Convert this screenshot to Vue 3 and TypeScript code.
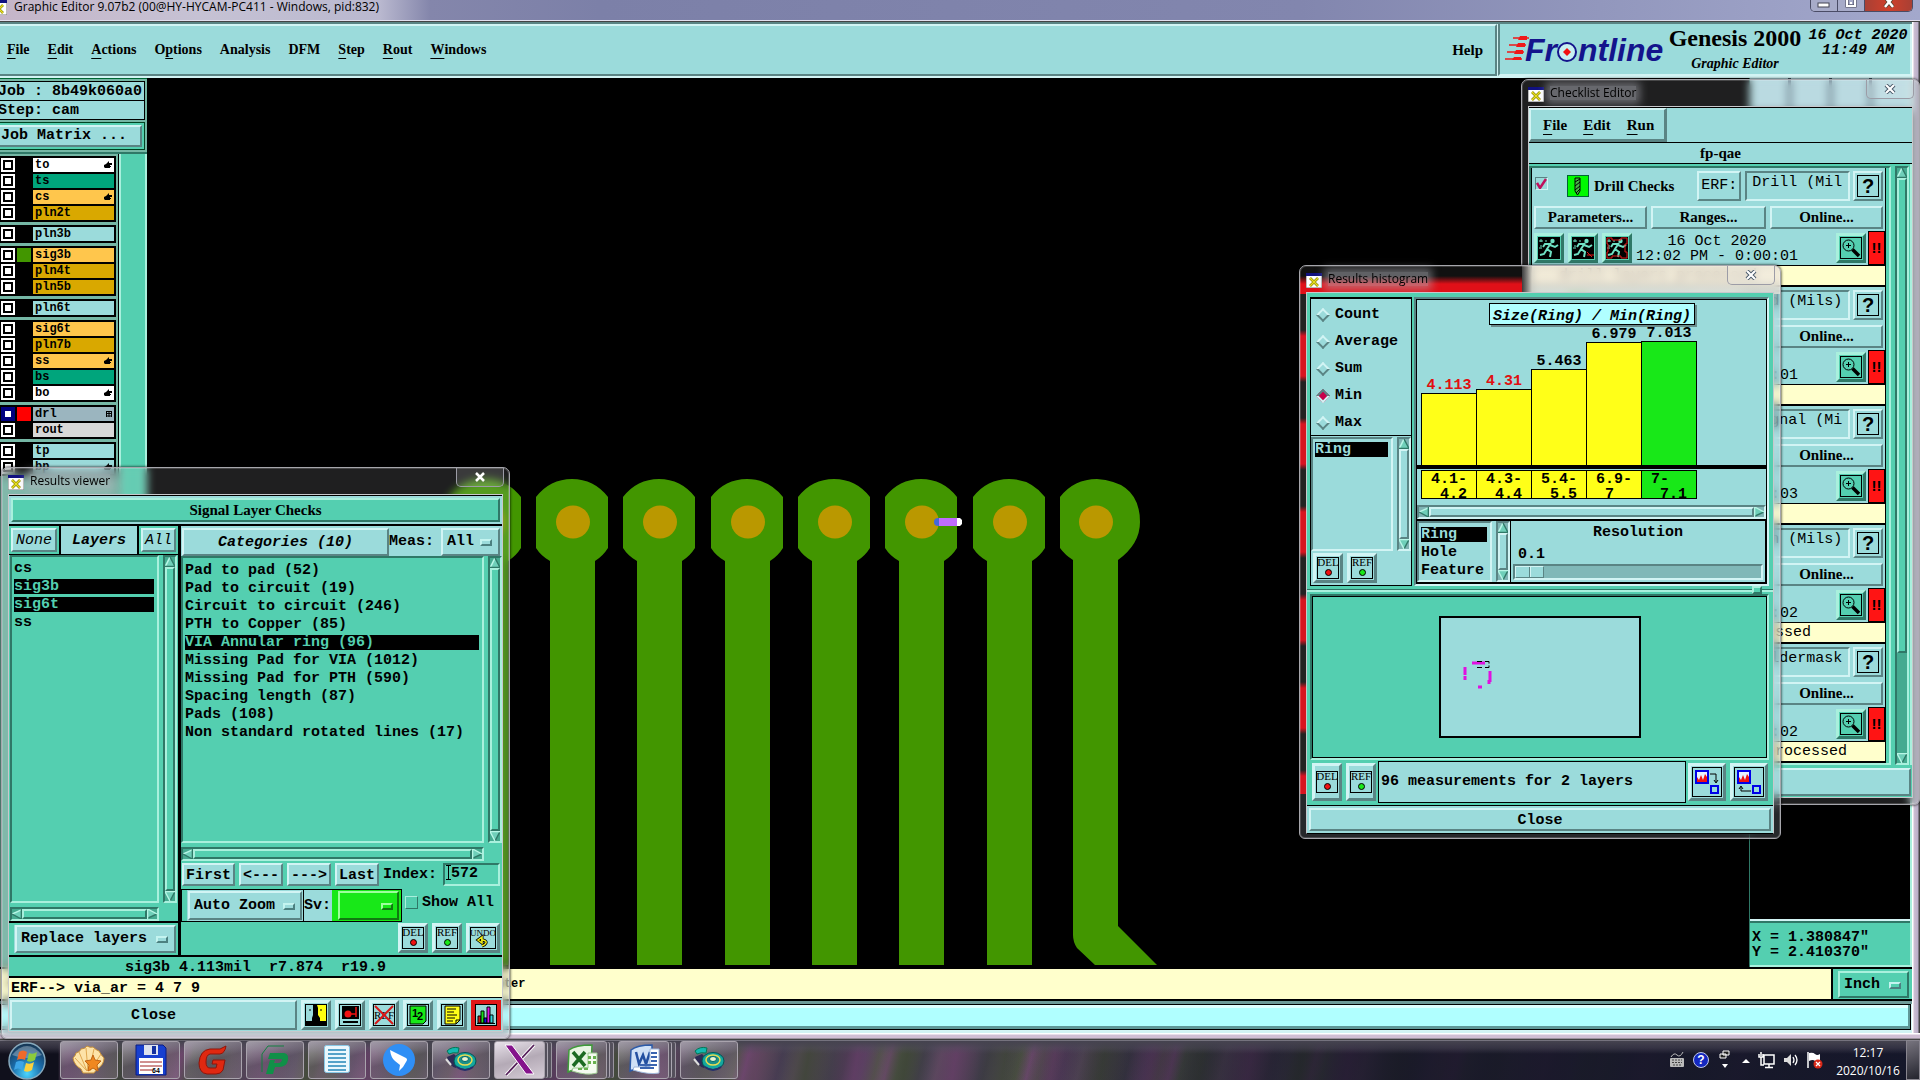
<script setup lang="ts">
import { ref } from 'vue'

interface MenuEntry { pre: string; key: string; post: string }
interface Layer { name: string; color: string; hand?: boolean; grid?: boolean; swatch?: string; active?: boolean }
interface Check { title: string; erf: string; time: string; message: string }
interface Bin { value: string; from: string; to: string; height: number; low?: boolean; good?: boolean }

const mainMenu: MenuEntry[] = [
  { pre: '', key: 'F', post: 'ile' },
  { pre: '', key: 'E', post: 'dit' },
  { pre: '', key: 'A', post: 'ctions' },
  { pre: 'O', key: 'p', post: 'tions' },
  { pre: 'Analysis', key: '', post: '' },
  { pre: 'DFM', key: '', post: '' },
  { pre: '', key: 'S', post: 'tep' },
  { pre: '', key: 'R', post: 'out' },
  { pre: '', key: 'W', post: 'indows' },
]
const checkMenu: MenuEntry[] = [
  { pre: '', key: 'F', post: 'ile' },
  { pre: '', key: 'E', post: 'dit' },
  { pre: '', key: 'R', post: 'un' },
]

const white = '#ffffff'
const mask = '#00a57c'
const signal = '#ffc64c'
const plane = '#d9a800'
const misc = '#9bdbdb'
const layerGroups: Layer[][] = [
  [
    { name: 'to', color: white, hand: true },
    { name: 'ts', color: mask },
    { name: 'cs', color: signal, hand: true },
    { name: 'pln2t', color: plane },
  ],
  [{ name: 'pln3b', color: misc }],
  [
    { name: 'sig3b', color: signal, swatch: '#429600' },
    { name: 'pln4t', color: plane },
    { name: 'pln5b', color: plane },
  ],
  [{ name: 'pln6t', color: misc }],
  [
    { name: 'sig6t', color: signal },
    { name: 'pln7b', color: plane },
    { name: 'ss', color: signal, hand: true },
    { name: 'bs', color: mask },
    { name: 'bo', color: white, hand: true },
  ],
  [
    { name: 'drl', color: '#9bb5bf', swatch: '#ff0000', active: true, grid: true },
    { name: 'rout', color: '#d8d8d8' },
  ],
  [
    { name: 'tp', color: misc },
    { name: 'bp', color: misc, hand: true },
  ],
]

const pads: number[] = [485, 572, 659, 747, 834, 921, 1009]

const viewerLayers = ['cs', 'sig3b', 'sig6t', 'ss']
const pickedLayers = ['sig3b', 'sig6t']
const categories = [
  'Pad to pad (52)', 'Pad to circuit (19)', 'Circuit to circuit (246)', 'PTH to Copper (85)',
  'VIA Annular ring (96)', 'Missing Pad for VIA (1012)', 'Missing Pad for PTH (590)',
  'Spacing length (87)', 'Pads (108)', 'Non standard rotated lines (17)',
]
const category = ref(4)
const index = ref('572')

const stats = ['Count', 'Average', 'Sum', 'Min', 'Max']
const stat = ref('Min')
const features = ['Ring', 'Hole', 'Feature']
const bins: Bin[] = [
  { value: '4.113', from: '4.1-', to: '4.2', height: 72, low: true },
  { value: '4.31', from: '4.3-', to: '4.4', height: 76, low: true },
  { value: '5.463', from: '5.4-', to: '5.5', height: 96 },
  { value: '6.979', from: '6.9-', to: '7', height: 123 },
  { value: '7.013', from: '7-', to: '7.1', height: 124, good: true },
]

const checks: Check[] = [
  { title: 'Drill Checks', erf: 'Drill (Mil', time: '0:00:01', message: '   drill layers processed' },
  { title: 'Board Checks', erf: 'Brd (Mils)', time: '0:00:01', message: '' },
  { title: 'Signal Checks', erf: 'Signal (Mi', time: '0:00:03', message: '' },
  { title: 'Plane Checks', erf: 'Pln (Mils)', time: '0:00:02', message: '         Plane layers processed' },
  { title: 'Mask Checks', erf: 'Soldermask', time: '0:00:02', message: '       Solder mask layers processed' },
]
</script>

<template>
  <div class="screen">
    <svg class="defs" aria-hidden="true">
      <symbol id="i-x" viewBox="0 0 16 15">
        <rect width="16" height="15" fill="#fff" stroke="#777" />
        <rect width="16" height="3" fill="#101080" />
        <path d="M4 5l8 8M12 5l-8 8" stroke="#8a8200" stroke-width="2.6" />
        <path d="M4 5l8 8M12 5l-8 8" stroke="#e8e020" stroke-width="1.3" />
      </symbol>
      <symbol id="i-up" viewBox="0 0 10 10">
        <path d="M5 0L0 10h10z" fill="#6fcfb9" /><path d="M5 0L0 10" stroke="#b8f6e6" stroke-width="1.6" /><path d="M5 0l5 9.4H0" fill="none" stroke="#2f7867" stroke-width="1.4" />
      </symbol>
      <symbol id="i-down" viewBox="0 0 10 10">
        <path d="M5 10L0 0h10z" fill="#6fcfb9" /><path d="M5 10L10 .6" stroke="#2f7867" stroke-width="1.4" /><path d="M5 10L0 .6h10" fill="none" stroke="#b8f6e6" stroke-width="1.4" />
      </symbol>
      <symbol id="i-left" viewBox="0 0 10 10">
        <path d="M0 5L10 0v10z" fill="#6fcfb9" /><path d="M0 5L10 .6" stroke="#b8f6e6" stroke-width="1.4" /><path d="M0 5l9.4 5V0" fill="none" stroke="#2f7867" stroke-width="1.4" />
      </symbol>
      <symbol id="i-right" viewBox="0 0 10 10">
        <path d="M10 5L0 0v10z" fill="#6fcfb9" /><path d="M10 5L0 9.6" stroke="#2f7867" stroke-width="1.4" /><path d="M10 5L.6 0v10" fill="none" stroke="#b8f6e6" stroke-width="1.4" />
      </symbol>
      <symbol id="i-del" viewBox="0 0 22 22">
        <rect x=".5" y=".5" width="21" height="21" fill="none" stroke="#000" />
        <text x="11" y="9" class="tiny" text-anchor="middle">DEL</text>
        <circle cx="11.500" cy="15.500" r="3" fill="#f01010" stroke="#000" />
      </symbol>
      <symbol id="i-ref" viewBox="0 0 22 22">
        <rect x=".5" y=".5" width="21" height="21" fill="none" stroke="#000" />
        <text x="11" y="9" class="tiny" text-anchor="middle">REF</text>
        <circle cx="11.500" cy="15.500" r="3" fill="#18e818" stroke="#000" />
      </symbol>
      <symbol id="i-zoom" viewBox="0 0 22 22">
        <rect x=".5" y=".5" width="21" height="21" fill="none" stroke="#000" />
        <circle cx="8.500" cy="8.500" r="5.500" fill="none" stroke="#000" />
        <path d="M6 8.500h5M8.500 6v5" stroke="#000" /><path d="M12.500 12.500l6.500 6.500" stroke="#000" stroke-width="3.500" />
      </symbol>
      <symbol id="i-run" viewBox="0 0 22 22">
        <rect width="22" height="22" fill="#000" />
        <circle cx="14.500" cy="4" r="2.200" fill="#6fe0c4" />
        <path d="M13 6l-4 6 4 3-1 5M9 12l-3 5-4 1M12 8l5 2 3-2M12 7L7 7 5 10" fill="none" stroke="#6fe0c4" stroke-width="2" />
        <path d="M3 2v3M1 4h4M8 3v2M3 8v2M1 11h3" stroke="#6fe0c4" />
      </symbol>
      <symbol id="i-drill" viewBox="0 0 22 22">
        <rect x=".5" y=".5" width="21" height="21" fill="#00fa00" stroke="#063" />
        <path d="M8 3h5v13l-2.500 4L8 16z" fill="#48b848" stroke="#000" /><path d="M8 7l5-3M8 11l5-4M8 15l5-4M9 18l4-4" fill="none" stroke="#000" />
      </symbol>
      <symbol id="i-hand" viewBox="0 0 8 8"><path d="M0 4l2-1 3-3v2h3v2H6v1h1v1H6v1H1L0 6z" fill="#000" /></symbol>
      <symbol id="i-tape" viewBox="0 0 32 28">
        <path d="M2 5q5-5 12-3l-1 5q-5-1-9 1z" fill="#14b8b0" stroke="#075" />
        <path d="M2 11l7-3 8 8-6 6q-7-2-9-11z" fill="#2d2b55" /><path d="M1 13l5 6" stroke="#ddd" stroke-width="2" />
        <ellipse cx="20" cy="15" rx="11" ry="8.500" fill="#14a79f" stroke="#055" />
        <ellipse cx="20" cy="14" rx="7" ry="5" fill="#1a8f8a" stroke="#e9dc50" stroke-width="1.500" />
        <ellipse cx="20" cy="13" rx="3.500" ry="2.500" fill="#e8f4d0" stroke="#066" />
        <path d="M12 21q8 6 16 0" fill="none" stroke="#27306a" stroke-width="2" />
      </symbol>
    </svg>

    <header class="titlebar">
      <svg class="ico" width="16" height="15"><use href="#i-x" /></svg>
      <span>Graphic Editor 9.07b2 (00@HY-HYCAM-PC411 - Windows, pid:832)</span>
      <div class="winbtns">
        <button type="button" aria-label="Minimize"><svg width="14" height="8"><rect x="1" y="3" width="11" height="4" fill="#fff" stroke="#445" /></svg></button>
        <button type="button" aria-label="Maximize"><svg width="12" height="8"><path d="M2 0v6h8V0" fill="none" stroke="#445" stroke-width="3" /><path d="M2 0v6h8V0M5 3h2" fill="none" stroke="#fff" stroke-width="2" /></svg></button>
        <button type="button" class="red" aria-label="Close"><svg width="12" height="8"><path d="M2-3l8 10M10-3L2 7" stroke="#543" stroke-width="4" /><path d="M2-3l8 10M10-3L2 7" stroke="#fff" stroke-width="2.500" /></svg></button>
      </div>
    </header>

    <div class="frame">
      <div class="editor">
        <div class="topbar">
          <nav class="menu raised cy">
            <button v-for="m in mainMenu" :key="m.pre + m.key + m.post" type="button">{{ m.pre }}<u>{{ m.key }}</u>{{ m.post }}</button>
            <button type="button" class="help">Help</button>
          </nav>
          <div class="brand sunk cy">
            <svg width="161" height="30" viewBox="0 0 161 30" role="img" aria-label="Frontline">
              <path d="M8 4h16M4 11h17M2 18h17M0 25h17" stroke="#f01818" stroke-width="1.500" />
              <path d="M15 2h7v4h-9zM13 9h7v4h-9zM11 16h7v4H9zM9 23h7v3H7z" fill="#f01818" />
              <text x="20" y="27" class="logo">Fr</text>
              <circle cx="62" cy="18" r="9" fill="#c8f0f0" stroke="#14148c" stroke-width="2" />
              <path d="M62 14l4 4-4 4-4-4z" fill="#f01010" />
              <text x="73" y="27" class="logo">ntline</text>
            </svg>
            <div class="product"><strong>Genesis 2000</strong><em>Graphic Editor</em></div>
            <div class="now">16 Oct 2020<br>11:49 AM</div>
          </div>
        </div>

        <main class="workspace">
          <aside class="layers">
            <div class="job"><p>Job : 8b49k060a0</p><p>Step: cam</p></div>
            <div class="matrix"><button type="button" class="raised cy">Job Matrix ...</button></div>
            <div class="layerlist">
              <div class="groups">
                <div v-for="(g, i) in layerGroups" :key="i" class="group">
                  <div v-for="l in g" :key="l.name" class="layer">
                    <span class="tick" :class="{ active: l.active }"></span>
                    <span class="swatch" :style="{ background: l.swatch }"></span>
                    <span class="lname" :style="{ background: l.color }">{{ l.name }}
                      <svg v-if="l.hand" width="8" height="8"><use href="#i-hand" /></svg>
                      <svg v-if="l.grid" width="6" height="6"><path d="M0 .5h6M0 2.500h6M0 5h6M.5 0v6M3 0v6M5.500 0v6" stroke="#000" /></svg>
                    </span>
                  </div>
                </div>
              </div>
            </div>
          </aside>

          <section class="canvas">
            <svg width="100%" height="100%">
              <g transform="translate(-147 -78)">
                <g v-for="x in pads" :key="x" :transform="`translate(${x} 522)`">
                  <path d="M-36-25Q-22-43 0-43Q22-43 36-25V26Q31 34 23 39V443H-22V39Q-31 34-36 26z" fill="#429600" />
                  <ellipse cx="1" rx="17" ry="16.500" fill="#ba9800" />
                </g>
                <path d="M1060 497Q1074 479 1097 479Q1140 482 1140 522Q1140 544 1118 560V926L1157 965H1095L1077 948Q1073 942 1073 935V560Q1065 555 1060 548z" fill="#429600" />
                <ellipse cx="1096" cy="522" rx="17" ry="16.500" fill="#ba9800" />
                <circle cx="938" cy="522" r="4" fill="#4468d8" />
                <rect x="939" y="518" width="18" height="8" fill="#c06cff" />
                <path d="M957 518h3l2 2v4l-2 2h-3z" fill="#fff" />
              </g>
            </svg>
          </section>

          <aside class="overview">
            <div class="cells"><i></i><i></i><i></i><i></i></div>
            <div class="dark"></div>
            <div class="xy"><span>X = 1.380847"</span><span>Y = 2.410370"</span></div>
          </aside>
        </main>

        <div class="statusrow">
          <div class="hint">&lt;M1&gt; - Select features; &lt;M2&gt; - Pan; &lt;M3&gt; - Menu, use cursor, press enter</div>
          <div class="units"><label class="opt tl"><select class="raised tl" aria-label="Units"><option>Inch</option></select></label></div>
        </div>
        <div class="prompt"><div></div></div>
      </div>
      <div class="edge"></div>
    </div>
    <div class="bottomedge"></div>

    <footer class="taskbar">
      <button type="button" class="orb" aria-label="Start">
        <svg width="40" height="40" viewBox="0 0 40 40">
          <defs><radialGradient id="orbg" cx=".5" cy=".85" r=".85"><stop offset="0" stop-color="#4bd5ff" /><stop offset=".5" stop-color="#1a6aa8" /><stop offset="1" stop-color="#16324e" /></radialGradient></defs>
          <circle cx="20" cy="20" r="18" fill="url(#orbg)" stroke="#87a9bd" stroke-width="1.500" />
          <path d="M5 14Q20-4 35 14Q20 20 5 14z" fill="#fff" opacity=".3" />
          <path d="M12 11q4-3 8 0l-2 8q-4-2-8 0z" fill="#ee6a2a" /><path d="M22 12q4 2 8-1l-2 8q-4 3-8 1z" fill="#8ccb3c" />
          <path d="M9 21q4-2 8 0l-2 8q-4-3-8 0z" fill="#3da5e8" /><path d="M19 22q4 2 8-1l-2 8q-4 3-8 1z" fill="#fbd03c" />
        </svg>
      </button>
      <div class="tasks">
        <button type="button" aria-label="Shell">
          <svg width="34" height="30" viewBox="0 0 34 30"><path d="M11 28L9 24Q2 20 1 13Q4 10 4 8Q8 7 9 4Q13 4 15 1Q18 3 21 2Q24 5 27 6Q29 10 32 13Q32 20 25 24L22 28z" fill="#fde3a8" stroke="#c89038" /><path d="M15 26L3 13M15 26L7 7M16 26L14 3M17 26L22 4M18 26L29 9" stroke="#e0a850" /><path d="M21 10l2 5 6 1-4 4 1 6-5-3-5 3 1-6-4-4 6-1z" fill="#f08820" stroke="#c06414" /></svg>
        </button>
        <button type="button" aria-label="Total Commander">
          <svg width="32" height="32" viewBox="0 0 32 32"><path d="M1 1h27l3 3v27H1z" fill="#1840d0" stroke="#0a1c80" /><rect x="9" y="1" width="14" height="10" fill="#dde2ee" /><rect x="17" y="2" width="4" height="8" fill="#1430a0" /><rect x="4" y="14" width="24" height="16" fill="#fff" /><path d="M5 18h22M5 22h22M5 26h12" stroke="#a02020" /><text x="17" y="29" font-size="7" font-family="Liberation Sans">64</text></svg>
        </button>
        <button type="button" aria-label="Genesis">
          <svg width="30" height="30" viewBox="0 0 30 30"><path d="M28 1q-1 7-6 8H12q-4 1-4 8 0 6 4 6h6l1-4h-5l1-4h12l-2 10q-2 4-7 4H9q-8-1-8-11Q2 5 12 4h10z" fill="#e02810" stroke="#90140a" /></svg>
        </button>
        <button type="button" aria-label="P viewer">
          <svg width="32" height="32" viewBox="0 0 32 32"><path d="M3 28V10L9 2h16" fill="none" stroke="#128040" /><path d="M11 9h14q5 1 4 7-1 7-9 7h-4l-2 7H7l4-14h5l-1 3h5q3-1 3-4H9z" fill="#109048" /></svg>
        </button>
        <button type="button" aria-label="Notes">
          <svg width="26" height="30" viewBox="0 0 26 30"><rect x=".5" y=".5" width="25" height="27" rx="2" fill="#eaf7fd" stroke="#88c8e6" /><path d="M4 5h18M4 9h18M4 13h18M4 17h18M4 21h18M4 25h18" stroke="#2486b8" stroke-width="1.500" /></svg>
        </button>
        <button type="button" aria-label="DingTalk">
          <svg width="34" height="34" viewBox="0 0 34 34"><circle cx="17" cy="17" r="16" fill="#2f8ff5" /><path d="M8 7l16 8q2 1 0 4l-3 5-4 4 1-6-5-4q-4-3-5-11z" fill="#fff" /></svg>
        </button>
        <button type="button" aria-label="Tape"><svg width="32" height="28"><use href="#i-tape" /></svg></button>
        <button type="button" class="stack on" aria-label="X server">
          <svg width="32" height="32" viewBox="0 0 32 32"><path d="M30 1L2 31" stroke="#fff" stroke-width="3.500" /><path d="M30 1L2 31" stroke="#55205a" stroke-width="1.800" /><path d="M1 1h7l22 29h-8z" fill="#85148c" stroke="#fff" /></svg>
        </button>
        <button type="button" class="stack" aria-label="Excel">
          <svg width="32" height="32" viewBox="0 0 32 32"><path d="M3 6q6-5 23-5l-1 23q-15 0-23 4z" fill="#e8f5e2" stroke="#3f9a3a" stroke-width="1.500" /><path d="M7 8l12 14M19 8L7 22" stroke="#1c6a22" stroke-width="3.500" /><path d="M22 9h9v20q-10 3-25-2l1-3h15z" fill="#f4fbf0" stroke="#9cc890" /><path d="M22 12h3v3h-3zM27 12h3v3h-3zM22 17h3v3h-3zM27 17h3v3h-3zM12 24h4v2h-4zM18 24h4v2h-4z" fill="#67b04e" /></svg>
        </button>
        <button type="button" class="stack" aria-label="Word">
          <svg width="32" height="32" viewBox="0 0 32 32"><path d="M3 6Q9 1 24 1v22Q10 23 2 27z" fill="#cfe0f6" stroke="#2c5aa8" stroke-width="1.500" /><path d="M8 8l3 12 4-9 3 9 4-12" fill="none" stroke="#2450a0" stroke-width="2.500" /><path d="M22 5h9v24q-10 2-26-3l1-3h16z" fill="#fff" stroke="#a0b8dc" /><path d="M23 9h6M23 13h6M23 17h6M12 24h14M12 21h17" stroke="#3a64b0" stroke-width="2" /></svg>
        </button>
        <button type="button" aria-label="Tape 2"><svg width="32" height="28"><use href="#i-tape" /></svg></button>
      </div>
      <div class="tray">
        <svg width="18" height="18" viewBox="0 0 18 18"><path d="M3 6q3-5 6-2t6-3" fill="none" stroke="#bbb" /><rect x="2" y="7" width="14" height="9" rx="1" fill="#bbb" /><path d="M4 9h10M4 11.500h10M5 14h8" stroke="#444" stroke-dasharray="2 1" /></svg>
        <svg width="18" height="18" viewBox="0 0 18 18"><circle cx="9" cy="9" r="7.500" fill="#1428c0" stroke="#c0c8e8" /><text x="9" y="13" text-anchor="middle" font-size="12" font-weight="700" fill="#fff" font-family="Liberation Sans">?</text></svg>
        <svg width="18" height="20" viewBox="0 0 18 20"><path d="M7 1h6v4H7zM4 4h6v4H4z" fill="#222" stroke="#fff" /><path d="M6 14h6l-3 4z" fill="#fff" /></svg>
        <svg width="12" height="18" viewBox="0 0 12 18"><path d="M2 12l4-4 4 4z" fill="#fff" /></svg>
        <svg width="18" height="18" viewBox="0 0 18 18"><path d="M6 4h10v9H6zM11 13v3M7 16.500h8M3 1v4M1 3v3h4V3M3 6v8h3" fill="none" stroke="#fff" stroke-width="1.500" /></svg>
        <svg width="18" height="18" viewBox="0 0 18 18"><path d="M2 7h3l4-4v12l-4-4H2z" fill="#ddd" /><path d="M11 6q2 3 0 6M13 4q4 5 0 10" fill="none" stroke="#fff" stroke-width="1.300" /></svg>
        <svg width="18" height="18" viewBox="0 0 18 18"><path d="M2 1v16" stroke="#fff" stroke-width="1.500" /><path d="M3 2q4-1 6 1t5 0v7q-3 2-5 0t-6 0z" fill="#fff" /><circle cx="12" cy="13" r="4.500" fill="#d82818" /><path d="M10 11l4 4M14 11l-4 4" stroke="#fff" stroke-width="1.300" /></svg>
        <div class="clock"><span>12:17</span><span>2020/10/16</span></div>
        <button type="button" class="desk" aria-label="Show desktop"></button>
      </div>
    </footer>

    <!-- Checklist Editor -->
    <section class="win checklist">
      <header class="cap"><svg class="ico" width="16" height="15"><use href="#i-x" /></svg><span>Checklist Editor</span>
        <button type="button" aria-label="Close Checklist Editor"><svg width="12" height="10"><path d="M2 1l8 8M10 1L2 9" stroke="#456" stroke-width="4" /><path d="M2 1l8 8M10 1L2 9" stroke="#fff" stroke-width="2.200" /></svg></button>
      </header>
      <div class="client">
        <div class="cmenurow cy"><nav class="cmenu raised cy"><button v-for="m in checkMenu" :key="m.key" type="button"><u>{{ m.key }}</u>{{ m.post }}</button></nav></div>
        <h2 class="cname cy">fp-qae</h2>
        <div class="cbody">
          <div class="items sunk tl">
            <article v-for="(c, i) in checks" :key="i" class="item cy">
              <div class="r1">
                <label class="pick"><input type="checkbox" checked :aria-label="c.title"><svg width="11" height="11"><path d="M1 5l3 5 6-9" fill="none" stroke="#c0105c" stroke-width="2.500" /></svg></label>
                <svg width="22" height="22"><use href="#i-drill" /></svg>
                <strong>{{ c.title }}</strong>
                <button type="button" class="erf raised cy">ERF:</button>
                <input class="sunk cy erfval" type="text" :value="c.erf" :aria-label="c.title + ' ERF'">
                <button type="button" class="raised cy q" aria-label="Help"><b>?</b></button>
              </div>
              <div class="r2"><button type="button" class="raised cy">Parameters...</button><button type="button" class="raised cy">Ranges...</button><button type="button" class="raised cy">Online...</button></div>
              <div class="r3">
                <button type="button" class="raised tl sq" aria-label="Run"><svg width="22" height="22"><use href="#i-run" /></svg></button>
                <button type="button" class="raised tl sq" aria-label="Run selected"><svg width="22" height="22"><use href="#i-run" /><path d="M15 15l5 5M22 18h-7" stroke="#e01818" /></svg></button>
                <button type="button" class="raised tl sq" aria-label="Run profile"><svg width="22" height="22"><use href="#i-run" /><path d="M1 1h5v2h9V1h6v6h-2v8h2v6h-6v-2H6v2H1v-6h1V7H1z" fill="none" stroke="#e01818" /></svg></button>
                <p>16 Oct 2020<br>12:02 PM - {{ c.time }}</p>
                <button type="button" class="raised tl sq zoom" aria-label="View results"><svg width="22" height="22"><use href="#i-zoom" /></svg></button>
                <span class="alert">!!</span>
              </div>
              <div class="msg">{{ c.message }}</div>
            </article>
          </div>
          <div class="sbv tl"><svg width="10" height="10"><use href="#i-up" /></svg><i class="raised tl"></i><b></b><svg width="10" height="10"><use href="#i-down" /></svg></div>
        </div>
        <div class="cfoot tl"><button type="button" class="raised cy" aria-label="Close checklist"></button></div>
      </div>
    </section>

    <!-- Results histogram -->
    <section class="win histogram">
      <header class="cap"><svg class="ico" width="16" height="15"><use href="#i-x" /></svg><span>Results histogram</span>
        <button type="button" aria-label="Close Results histogram"><svg width="12" height="10"><path d="M2 1l8 8M10 1L2 9" stroke="#456" stroke-width="4" /><path d="M2 1l8 8M10 1L2 9" stroke="#fff" stroke-width="2.200" /></svg></button>
      </header>
      <div class="client tl">
        <div class="htop">
          <div class="hleft cy">
            <div class="radios"><label v-for="s in stats" :key="s"><input v-model="stat" type="radio" name="stat" :value="s">{{ s }}</label></div>
            <div class="hlist">
              <ul class="list sunk cy"><li class="sel">Ring</li></ul>
              <div class="sbv cy"><svg width="10" height="10"><use href="#i-up" /></svg><i class="raised cy"></i><svg width="10" height="10"><use href="#i-down" /></svg></div>
            </div>
            <div class="hbtns"><button type="button" class="raised cy sq" aria-label="Delete"><svg width="22" height="22"><use href="#i-del" /></svg></button><button type="button" class="raised cy sq" aria-label="Reference"><svg width="22" height="22"><use href="#i-ref" /></svg></button></div>
          </div>
          <div class="hright sunk cy">
            <div class="chart">
              <h3>Size(Ring) / Min(Ring)</h3>
              <div class="bars">
                <div v-for="b in bins" :key="b.value" class="col" :class="{ low: b.low, good: b.good }"><span>{{ b.value }}</span><i :style="{ height: b.height + 'px' }"></i></div>
              </div>
              <div class="bins"><div v-for="b in bins" :key="b.value" :class="{ good: b.good }"><span>{{ b.from }}</span><span>{{ b.to }}</span></div></div>
              <div class="sbh cy"><svg width="10" height="10"><use href="#i-left" /></svg><i class="raised cy"></i><svg width="10" height="10"><use href="#i-right" /></svg></div>
            </div>
            <div class="reso">
              <ul class="list sunk cy"><li v-for="(f, i) in features" :key="f" :class="{ sel: i === 0 }">{{ f }}</li></ul>
              <div class="sbv cy"><svg width="10" height="10"><use href="#i-up" /></svg><i class="raised cy"></i><svg width="10" height="10"><use href="#i-down" /></svg></div>
              <div class="slide"><label for="resolution">Resolution</label><output>0.1</output><input id="resolution" type="range" class="sunk" min="0" max="100" value="0"></div>
            </div>
          </div>
        </div>
        <div class="sash"><i class="raised tl"></i></div>
        <div class="map sunk tl">
          <svg width="202" height="122">
            <rect x="1" y="1" width="200" height="120" fill="#9bdbdb" stroke="#000" stroke-width="2" />
            <path d="M33 47h13M26 51v8M26 60v4M51 55v11M50 64v4M39 71h4" stroke="#e010e0" stroke-width="3" fill="none" />
            <path d="M38 45.500h5M38 51.500h5M46 45.500h4v2M46 51.500h4v-2" stroke="#000" fill="none" />
          </svg>
        </div>
        <div class="hinfo">
          <button type="button" class="raised cy tall" aria-label="Delete all"><svg width="22" height="22"><use href="#i-del" /></svg></button>
          <button type="button" class="raised cy tall" aria-label="Reference all"><svg width="22" height="22"><use href="#i-ref" /></svg></button>
          <p class="cy">96 measurements for 2 layers</p>
          <button type="button" class="raised cy wide" aria-label="Open"><svg width="30" height="30"><rect x=".5" y=".5" width="29" height="29" fill="none" stroke="#000" /><rect x="4" y="4" width="12" height="12" fill="#e8f0ff" stroke="#0000e8" stroke-width="2" /><path d="M5 15V10l2 3 2-5 2 5 2-6 2 3v5z" fill="#f01010" /><path d="M18 7h6v8M22 13l2 3 2-3" fill="none" stroke="#000" /><rect x="19" y="19" width="7" height="7" fill="none" stroke="#0000e8" stroke-width="2" /></svg></button>
          <button type="button" class="raised cy wide" aria-label="Back"><svg width="30" height="30"><rect x=".5" y=".5" width="29" height="29" fill="none" stroke="#000" /><rect x="4" y="4" width="12" height="12" fill="#e8f0ff" stroke="#0000e8" stroke-width="2" /><path d="M5 15V10l2 3 2-5 2 5 2-6 2 3v5z" fill="#f01010" /><path d="M17 24H7v-4M5 22l2-3 2 3" fill="none" stroke="#000" /><rect x="19" y="19" width="7" height="7" fill="none" stroke="#0000e8" stroke-width="2" /></svg></button>
        </div>
        <div class="hclose cy"><button type="button" class="raised cy">Close</button></div>
      </div>
    </section>

    <!-- Results viewer -->
    <section class="win viewer">
      <header class="cap"><svg class="ico" width="16" height="15"><use href="#i-x" /></svg><span>Results viewer</span>
        <button type="button" aria-label="Close Results viewer"><svg width="12" height="10"><path d="M2 1l8 8M10 1L2 9" stroke="#fff" stroke-width="2.500" /></svg></button>
      </header>
      <div class="client">
        <div class="vhead cy"><h2 class="raised tl">Signal Layer Checks</h2></div>
        <div class="panes">
          <div class="vleft">
            <div class="lhead"><span class="tl"><button type="button" class="raised cy">None</button></span><b class="cy">Layers</b><span class="tl"><button type="button" class="raised cy">All</button></span></div>
            <div class="lbody tl">
              <ul class="list sunk tl"><li v-for="l in viewerLayers" :key="l" :class="{ sel: pickedLayers.includes(l) }">{{ l }}</li></ul>
              <div class="sbv tl"><svg width="10" height="10"><use href="#i-up" /></svg><i class="raised tl"></i><svg width="10" height="10"><use href="#i-down" /></svg></div>
              <div class="sbh tl"><svg width="10" height="10"><use href="#i-left" /></svg><i class="raised tl"></i><svg width="10" height="10"><use href="#i-right" /></svg></div>
            </div>
            <div class="lfoot cy"><label class="opt"><select class="raised cy" aria-label="Layer mode"><option>Replace layers</option></select></label></div>
          </div>
          <div class="vright tl">
            <div class="rhead cy"><button type="button" class="raised cy cat">Categories (10)</button><label for="meas">Meas:</label><span class="opt"><select id="meas" class="raised cy"><option>All</option></select></span></div>
            <div class="rbody">
              <ul class="list sunk tl"><li v-for="(c, i) in categories" :key="c" :class="{ sel: i === category }" @click="category = i">{{ c }}</li></ul>
              <div class="sbv tl"><svg width="10" height="10"><use href="#i-up" /></svg><i class="raised tl"></i><svg width="10" height="10"><use href="#i-down" /></svg></div>
              <div class="sbh tl"><svg width="10" height="10"><use href="#i-left" /></svg><i class="raised tl"></i><svg width="10" height="10"><use href="#i-right" /></svg></div>
            </div>
            <div class="nav"><button type="button" class="raised cy w">First</button><button type="button" class="raised cy">&lt;---</button><button type="button" class="raised cy">---&gt;</button><button type="button" class="raised cy">Last</button><label for="idx">Index:</label><span class="field"><input id="idx" v-model="index" type="text" class="sunk tl"><svg width="5" height="15"><path d="M0 .5h5M2.500 0v15M0 14.500h5" stroke="#000" /></svg></span></div>
            <div class="optrow">
              <div class="boxed"><span class="opt az cy"><select class="raised cy" aria-label="Zoom mode"><option>Auto Zoom</option></select></span><label for="sv" class="cy">Sv:</label><span class="opt sv"><select id="sv" class="raised"><option></option></select></span></div>
              <label class="show"><input type="checkbox" class="raised">Show All</label>
            </div>
            <div class="dru">
              <button type="button" class="raised cy sq" aria-label="Delete result"><svg width="22" height="22"><use href="#i-del" /></svg></button>
              <button type="button" class="raised cy sq" aria-label="Reference result"><svg width="22" height="22"><use href="#i-ref" /></svg></button>
              <button type="button" class="raised cy sq u" aria-label="Undo"><svg width="26" height="22"><rect x=".5" y=".5" width="25" height="21" fill="none" stroke="#000" /><text x="13" y="9" class="tiny sm" text-anchor="middle">UNDO</text><path d="M8 13l4-3v6zM11 13h2q4 1 3 3t-4 3" fill="none" stroke="#000" stroke-width="3" /><path d="M8 13l4-3v6zM11 13h2q4 1 3 3t-4 3" fill="none" stroke="#f4f018" stroke-width="1.500" /></svg></button>
            </div>
          </div>
        </div>
        <p class="vinfo tl">sig3b 4.113mil&nbsp; r7.874&nbsp; r19.9</p>
        <p class="verf">ERF--&gt; via_ar = 4 7 9</p>
        <div class="vfoot cy">
          <button type="button" class="raised cy close">Close</button>
          <button type="button" class="raised cy sq" aria-label="Compare"><svg width="22" height="22"><rect x=".5" y=".5" width="21" height="21" fill="#9bdbdb" stroke="#000" /><path d="M12 1h9v17h-9z" fill="#ffff10" /><path d="M8 1h4l1 3v7l2 3v3h6v4H1v-4h6v-3l1-3z" fill="#000" /><path d="M5 5v2M16 5v2" stroke="#000" /></svg></button>
          <button type="button" class="raised cy sq" aria-label="Snapshot"><svg width="22" height="22"><rect x=".5" y=".5" width="21" height="21" fill="#9bdbdb" stroke="#000" /><path d="M3 2h17v13H3z" fill="#000" /><circle cx="9" cy="10" r="3.500" fill="#f01010" /><path d="M12 10h5M17 3v10" stroke="#f01010" stroke-width="1.500" /><path d="M4 18h15" stroke="#000" stroke-width="2" /></svg></button>
          <button type="button" class="raised cy sq" aria-label="Clear reference"><svg width="22" height="22"><rect x=".5" y=".5" width="21" height="21" fill="none" stroke="#000" /><text x="11" y="15" class="tiny" text-anchor="middle">REF</text><path d="M2 2l18 18M20 2L2 20" stroke="#d81818" stroke-width="2" /></svg></button>
          <button type="button" class="raised cy sq" aria-label="Numbers"><svg width="22" height="22"><rect x=".5" y=".5" width="21" height="21" fill="none" stroke="#000" /><path d="M3 2h16v15l-3 3H3z" fill="#18e818" stroke="#000" /><text x="5" y="13" class="num">1</text><text x="10" y="16" class="num">2</text></svg></button>
          <button type="button" class="raised cy sq" aria-label="Notes"><svg width="22" height="22"><rect x=".5" y=".5" width="21" height="21" fill="none" stroke="#000" /><path d="M4 2h15v14l-4 4H4z" fill="#ffff18" stroke="#000" /><path d="M6 5h9M6 8h7M6 11h10M6 14h8M6 17h6M15 20v-4h4" fill="none" stroke="#000" /></svg></button>
          <button type="button" class="raised cy sq hot" aria-label="Histogram"><svg width="22" height="22"><rect x=".5" y=".5" width="21" height="21" fill="#9bdbdb" stroke="#000" /><path d="M3 12h3v7H3z" fill="#d01818" stroke="#000" /><path d="M6 7h3v12H6z" fill="#18e018" stroke="#000" /><path d="M9 14h3v5H9z" fill="#1010e0" stroke="#000" /><path d="M12 3h3v16h-3z" fill="#e010e0" stroke="#000" /><path d="M15 11h3v8h-3z" fill="#30d8e0" stroke="#000" /><path d="M2 19.500h18" stroke="#000" /></svg></button>
        </div>
      </div>
    </section>
  </div>
</template>

<style>
html, body { margin: 0; background: #000; }
.tiny { font: 400 11px "Liberation Serif", serif; }
.tiny.sm { font-size: 9px; }
.num { font: 700 11px "Liberation Sans", sans-serif; }
</style>

<style scoped>
.screen {
  --cy: #9bdbdb; --cyl: #d2f4f4; --cyd: #5a8484;
  --tl: #54cfb0; --tll: #a9f0dd; --tld: #2f7867;
  position: relative; display: flex; flex-direction: column; height: 100vh; overflow: hidden;
  background: #000; color: #000; font: 700 15px/18px "Liberation Mono", monospace; white-space: nowrap;
}
.screen *, .screen *::before, .screen *::after { box-sizing: border-box; }
h2, h3, p, ul { margin: 0; padding: 0; font: inherit; list-style: none; }
button, select, input { font: inherit; color: inherit; margin: 0; padding: 0; background: none; border: 0; border-radius: 0; outline: 0; }
button { display: flex; align-items: center; justify-content: center; }
select { appearance: none; width: 100%; height: 100%; display: block; }
svg { display: block; flex: none; }
.defs { position: absolute; width: 0; height: 0; }
.cy { --f: var(--cy); --l: var(--cyl); --d: var(--cyd); background: var(--cy); }
.tl { --f: var(--tl); --l: var(--tll); --d: var(--tld); background: var(--tl); }
.raised { border: 2px solid; border-color: var(--l) var(--d) var(--d) var(--l); }
.sunk { border: 2px solid; border-color: var(--d) var(--l) var(--l) var(--d); }

/* main window */
.titlebar { flex: none; height: 22px; display: flex; align-items: flex-start; border-bottom: 1px solid #444; box-shadow: inset 0 -1px #e2dfee; background: linear-gradient(90deg, #c5b5c8 0, #c6c2d4 200px, #b9b8cf 380px, #8486ab 430px, #7c80a8 600px, #8286ae 1300px, #9297bd 1600px, #a3a8cc 100%); font: 400 12px/14px "Open Sans", sans-serif; }
.titlebar .ico { margin-left: -9px; }
.titlebar span { margin-left: 7px; }
.winbtns { margin-left: auto; margin-right: 7px; display: flex; height: 12px; border: 1px solid #4a4c66; border-top: 0; border-radius: 0 0 5px 5px; overflow: hidden; }
.winbtns button { width: 27px; border-right: 1px solid #4a4c66; background: #a7abc9; align-items: flex-start; }
.winbtns .red { width: 47px; border: 0; background: linear-gradient(90deg, #a84034, #d0402c, #a84034); }
.frame { flex: 1; min-height: 0; display: flex; }
.edge { flex: none; width: 8px; background: linear-gradient(90deg, #fff 1px, #cdbfd3 2px, #b9aec8 6px, #444 7px); }
.editor { flex: 1; min-width: 0; display: flex; flex-direction: column; }
.topbar { flex: none; height: 56px; display: flex; gap: 1px; background: var(--cyl); border-top: 2px solid var(--cyd); border-bottom: 2px solid var(--cyl); }
.menu { flex: 1; display: flex; align-items: center; gap: 18px; padding: 0 12px 0 7px; font: 700 14px/18px "Liberation Serif", serif; border-left: 0; }
u { text-underline-offset: 4px; text-decoration-thickness: 1px; }
button u:empty { display: none; }
.help { margin-left: auto; font-size: 15px; }
.brand { width: 414px; display: flex; align-items: center; padding-left: 5px; border-top: 0; }
.logo { font: italic 700 32px "Liberation Sans", sans-serif; fill: #14148c; }
.product { margin-left: 1px; width: 136px; display: flex; flex-direction: column; align-items: center; font-family: "Liberation Serif", serif; }
.product strong { font-size: 24px; line-height: 28px; }
.product em { font-size: 14px; line-height: 23px; }
.now { width: 100px; margin-left: 5px; font-style: italic; line-height: 15px; text-align: center; align-self: flex-start; padding-top: 4px; }

.workspace { flex: 1; min-height: 0; display: flex; }
.layers { flex: none; width: 147px; background: #75b7a5; display: flex; flex-direction: column; border-top: 1px solid #063; overflow: hidden; }
.job { margin: 2px 2px 0 0; border: 1px solid #000; border-left: 0; display: grid; gap: 1px; background: #000; }
.job p { background: var(--cy); height: 18px; line-height: 19px; text-indent: -2px; }
.matrix { margin: 2px 2px 0 0; height: 28px; border: 1px solid #042; border-left: 0; background: var(--tl); padding: 2px 2px 2px 0; }
.matrix button { width: 100%; height: 100%; justify-content: flex-start; padding-left: 1px; border-left: 0; }
.layerlist { flex: 1; min-height: 0; margin-top: 2px; border-top: 2px solid #2f7867; background: linear-gradient(90deg, transparent 118px, #000 118px, #000 119px, #a9f0dd 119px, #a9f0dd 121px, var(--tl) 121px, var(--tl) 145px, #a9f0dd 145px); padding-top: 2px; }
.groups { width: 116px; display: flex; flex-direction: column; gap: 3px; }
.group { background: #000; padding: 2px 2px 0 1px; font: 700 12px/14px "Liberation Mono", monospace; }
.layer { display: flex; gap: 2px; padding-bottom: 2px; }
.tick { width: 14px; height: 14px; border: 2px solid #fff; background: #fff; display: block; }
.tick::before { content: ""; display: block; width: 10px; height: 10px; border: 2px solid #000; }
.tick.active, .tick.active::before { border-color: #000080; }
.swatch { width: 14px; height: 14px; }
.lname { flex: 1; height: 14px; padding: 0 2px; display: flex; align-items: center; }
.lname svg { margin-left: auto; }
.canvas { flex: 1; min-width: 0; min-height: 0; overflow: hidden; }
.canvas svg { height: 100%; }
.overview { flex: none; width: 163px; border-left: 1px solid #2f7867; display: flex; flex-direction: column; border-right: 2px solid var(--tll); }
.cells { height: 34px; display: grid; grid-template-columns: repeat(4, 1fr); gap: 3px; background: #456; }
.cells i { background: #b9dfe6; }
.dark { flex: 1; border-bottom: 2px solid var(--cyl); }
.xy { height: 46px; background: var(--tl); border-top: 2px solid var(--tld); border-bottom: 2px solid var(--tll); padding: 7px 2px 3px; display: flex; flex-direction: column; line-height: 15px; }
.statusrow { flex: none; display: flex; height: 34px; gap: 2px; border: solid #000; border-width: 2px 0; background: #000; }
.hint { flex: 1; min-width: 0; overflow: hidden; background: #ffffcc; padding-left: 7px; font-size: 12px; line-height: 31px; }
.units { width: 79px; background: var(--tl); padding: 2px 3px 2px 5px; }
.opt { position: relative; display: block; }
.opt::after { content: ""; position: absolute; right: 8px; top: 50%; width: 12px; height: 7px; margin-top: -3px; border: 2px solid; border-color: #c4f4f0 #4c8080 #4c8080 #c4f4f0; pointer-events: none; }
.units .opt { height: 27px; }
.opt select { padding-left: 4px; }
.prompt { flex: none; height: 32px; padding: 0 1px 3px 0; border-top: 3px solid #6f9a98; background: var(--cyl); }
.prompt div { height: 100%; background: #b0ffff; border: 1px solid #000; box-shadow: inset -2px -3px #5f9898, inset 0 3px #e0ffff; }
.bottomedge { flex: none; height: 7px; background: linear-gradient(#fff 1px, #d0bfd4 2px, #d0bfd4 5px, #666 6px, #222 7px); }

/* taskbar */
.taskbar { flex: none; height: 40px; display: flex; align-items: center; background: linear-gradient(#a5a2ad 0, #45434f 1px, rgba(80, 76, 92, .5) 8px, transparent 14px), linear-gradient(90deg, #10101c 0, #10101c 58px, transparent 62px, transparent 1000px, rgba(20, 20, 36, .85) 1400px, #15172a 100%), repeating-linear-gradient(100deg, transparent 0, rgba(60, 70, 50, .7) 23px, transparent 47px, rgba(110, 60, 110, .6) 71px, transparent 97px), repeating-linear-gradient(105deg, #3d3a46 0, #4d4358 18px, #4f5248 31px, #6a4a6a 42px, #4c5048 53px, #423c4e 74px, #57495a 91px, #3d3a46 137px); }
.orb { margin: 2px 13px 0 7px; }
.tasks { display: flex; gap: 4px; height: 38px; }
.tasks button { width: 58px; border: 1px solid #a9a3ad; border-radius: 3px; background: linear-gradient(165deg, rgba(220, 212, 224, .6), rgba(120, 108, 124, .45) 50%, rgba(150, 130, 150, .4)); }
.tasks .stack { width: 51px; margin-right: 7px; box-shadow: 3px 0 0 -1px #54505c, 4px 0 0 -1px #aaa5b0, 7px 0 0 -1px #54505c, 8px 0 0 -1px #99949f; }
.tasks .on { background: linear-gradient(165deg, #e8e2ea, #b4aab6 50%, #d5ccd6); }
.tray { margin-left: auto; display: flex; align-items: center; gap: 6px; }
.clock { width: 76px; text-align: center; display: flex; flex-direction: column; color: #fff; font: 400 12px/18px "Open Sans", sans-serif; padding-top: 3px; }
.desk { width: 14px; height: 40px; border: 1px solid #88858f; background: linear-gradient(160deg, #77747e, #24242e); margin-left: -6px; }

/* floating windows */
.win { position: absolute; display: flex; flex-direction: column; padding: 0 6px 6px; border: 1px solid #a6a6ac; border-radius: 7px 7px 6px 6px; box-shadow: 0 0 3px #000, inset 0 0 0 1px rgba(255, 255, 255, .18); background: rgba(190, 190, 200, .16); backdrop-filter: blur(4px); }
.cap { flex: none; height: 26px; display: flex; align-items: flex-start; font: 400 12px/26px "Open Sans", sans-serif; }
.cap .ico { margin: 7px 6px 0 0; }
.cap span { height: 14px; margin-top: 6px; line-height: 14px; background: rgba(175, 178, 186, .5); box-shadow: 0 0 9px 4px rgba(175, 178, 186, .5); }
.cap button { margin-left: auto; margin-right: -1px; width: 48px; height: 19px; border: 1px solid #9c9ca6; border-top: 0; border-radius: 0 0 5px 5px; background: rgba(255, 255, 255, .12); }
.client { flex: 1; min-height: 0; border: 1px solid #c8c8cc; display: flex; flex-direction: column; background: #000; padding-top: 1px; }
.list { overflow: hidden; padding: 4px 3px 0 2px; font-size: 15px; line-height: 15px; }
.list li { height: 15px; margin-bottom: 3px; }
.list .sel { background: #000; color: var(--f); }
.sbv, .sbh { display: flex; border: 2px solid; border-color: var(--d) var(--l) var(--l) var(--d); background: color-mix(in srgb, var(--f), #000 18%); }
.sbv { width: 14px; flex-direction: column; }
.sbh { height: 14px; }
.sbv i, .sbh i { flex: 1; }
.sq { width: 30px; height: 30px; flex: none; }
.sq, .tall, .wide { border-width: 3px; }
.nav button, .close, .hclose button, .lhead button, .cat { padding-top: 2px; }

/* Checklist Editor */
.checklist { right: 0; top: 79px; width: 399px; height: 726px; font-family: "Liberation Serif", serif; }
.cmenurow { height: 35px; flex: none; border-bottom: 1px solid #000; }
.cmenu { width: 138px; height: 34px; display: flex; align-items: center; gap: 16px; padding-left: 12px; border-right-width: 3px; border-bottom-width: 3px; }
.cname { height: 21px; flex: none; line-height: 21px; text-align: center; border-bottom: 1px solid #000; }
.cbody { flex: 1; min-height: 0; display: flex; background: var(--tl); padding-top: 2px; gap: 4px; border-right: 2px solid var(--tll); }
.items { width: 362px; overflow: hidden; padding-right: 3px; }
.item { height: 119px; padding-top: 3px; border-left: 1px solid #000; border-right: 1px solid #000; border-bottom: 2px solid #000; font-weight: 400; }
.r1 { height: 30px; display: flex; align-items: center; padding: 0 2px; }
.r1 strong { width: 104px; margin-left: 5px; }
.pick { position: relative; width: 13px; height: 13px; margin: -6px 19px 0 1px; }
.pick input { appearance: none; display: block; width: 13px; height: 13px; border: 1px solid #5a8484; border-right-color: #d2f4f4; border-bottom-color: #d2f4f4; }
.pick svg { position: absolute; left: 1px; top: 1px; }
.erf { width: 44px; height: 30px; font-family: "Liberation Mono", monospace; }
.erfval { width: 105px; height: 30px; margin: 0 3px 0 4px; padding: 0 0 8px 5px; font-family: "Liberation Mono", monospace; }
.q { width: 30px; height: 30px; }
.q b { width: 22px; height: 22px; border: 1px solid #000; font: 700 20px/21px "Liberation Sans", sans-serif; }
.r2 { height: 23px; margin-top: 5px; padding: 0 2px; display: grid; grid-template-columns: 113px 1fr 113px; gap: 4px; font-weight: 700; line-height: 17px; }
.r3 { height: 34px; margin-top: 2px; display: flex; align-items: center; gap: 4px; padding-left: 2px; }
.r3 p { flex: 1; text-align: center; font-family: "Liberation Mono", monospace; line-height: 15px; padding-top: 1px; }
.r3 .zoom { margin: 0 -2px 0 34px; }
.alert { width: 17px; height: 34px; border: 1px solid #000; background: #ff1414; font: 700 15px/32px "Liberation Sans", sans-serif; text-align: center; }
.msg { height: 20px; border-top: 1px solid #000; background: #ffffcc; font-family: "Liberation Mono", monospace; line-height: 20px; white-space: pre; }
.cbody .sbv b { height: 100px; }
.cfoot { height: 32px; flex: none; padding: 3px 1px 1px; }
.cfoot button { width: 100%; height: 100%; }

/* Results histogram */
.histogram { right: 139px; top: 265px; width: 482px; height: 574px; background: linear-gradient(#111 0, #111 10px, #e01018 18px, #e01018 28px) 0 0 / 222px 28px no-repeat, linear-gradient(90deg, rgba(60, 60, 60, .9), rgba(240, 230, 220, .7) 10px) 222px 0 / 260px 28px no-repeat, repeating-linear-gradient(#222 0, #222 36px, #d81420 42px, #d81420 82px, #222 88px) 0 28px / 6px 500px no-repeat, rgba(190, 200, 215, .2); padding-bottom: 4px; }
.histogram .client { background: var(--tl); border-bottom-color: #000; }
.htop { display: flex; gap: 2px; padding: 3px 4px 0 3px; height: 292px; }
.hleft { width: 102px; border: 2px solid #000; border-width: 2px 1px 1px; display: flex; flex-direction: column; }
.radios { height: 137px; border-bottom: 1px solid #000; padding-top: 2px; }
.radios label { display: flex; align-items: center; height: 27px; gap: 7px; padding-left: 7px; }
.radios input { appearance: none; width: 10px; height: 10px; transform: rotate(45deg); border: 2px solid; border-color: #d2f4f4 #5a8484 #5a8484 #d2f4f4; }
.radios input:checked { background: #c8004c; border-color: #5a8484 #d2f4f4 #d2f4f4 #5a8484; }
.hlist { height: 114px; display: flex; justify-content: space-between; margin-top: 1px; }
.hlist .list { width: 82px; padding-top: 3px; }
.hbtns { display: flex; gap: 4px; padding: 2px; }
.hright { flex: 1; min-width: 0; display: flex; flex-direction: column; }
.chart { position: relative; border: 1px solid #000; border-bottom: 0; }
.chart h3 { position: absolute; left: 72px; top: 3px; padding: 0 3px; height: 22px; line-height: 26px; border: 1px solid #000; background: #b0ffff; font-style: italic; box-shadow: 2px 2px #6a8c8c; }
.bars { height: 169px; display: flex; align-items: flex-end; border-bottom: 4px solid #000; padding-left: 4px; }
.col { width: 56px; margin-right: -1px; display: flex; flex-direction: column; align-items: center; line-height: 14px; }
.col i { width: 56px; background: #ffff18; border: 1px solid #000; border-bottom: 0; }
.col.good i, .bins .good { background: #18e818; }
.low span { color: #e01010; }
.bins { display: flex; padding: 1px 0 0 4px; height: 36px; }
.bins div { width: 56px; height: 29px; margin-right: -1px; border: 1px solid #000; background: #ffff18; display: flex; flex-direction: column; padding: 1px 0 0 9px; line-height: 15px; }
.bins span + span { padding-left: 9px; }
.reso { flex: 1; min-height: 0; display: flex; border: 2px solid #000; border-left-width: 1px; }
.reso .list { width: 75px; }
.reso .sbv { margin-left: 4px; }
.slide { flex: 1; border-left: 1px solid #000; padding: 3px 2px 0; display: flex; flex-direction: column; }
.slide label { text-align: center; }
.slide output { padding: 4px 0 0 5px; }
.slide input { --l: #d2f4f4; --d: #5a8484; appearance: none; width: 100%; height: 16px; background: #80b8b8; }
.slide input::-webkit-slider-thumb { appearance: none; width: 29px; height: 12px; background: linear-gradient(90deg, transparent 13px, #5a8484 13px, #5a8484 14px, #d2f4f4 14px, #d2f4f4 15px, transparent 15px) #9bdbdb; border: 1px solid; border-color: #d2f4f4 #5a8484 #5a8484 #d2f4f4; }
.sash { height: 8px; position: relative; background: linear-gradient(transparent 3px, #2f7867 3px, #2f7867 4px, #a9f0dd 4px, #a9f0dd 6px, transparent 6px); }
.sash i { position: absolute; right: 11px; top: 0; width: 10px; height: 8px; }
.map { margin: 0 4px 0 3px; flex: 1; display: flex; align-items: center; justify-content: center; box-shadow: inset 0 0 0 1px #000; }
.hinfo { display: flex; gap: 4px; height: 43px; padding: 1px 5px; margin-bottom: 2px; align-items: center; }
.hinfo p { flex: 1; height: 42px; line-height: 40px; border: 1px solid #000; padding-left: 2px; margin: 0 -2px; }
.tall { width: 30px; height: 38px; }
.wide { width: 38px; height: 38px; }
.hclose { height: 28px; border-top: 1px solid #000; padding: 2px; }
.hclose button { width: 100%; height: 100%; }

/* Results viewer */
.viewer { left: 1px; bottom: 41px; width: 509px; height: 572px; }
.vhead { height: 28px; padding: 2px; flex: none; }
.vhead h2 { height: 24px; line-height: 21px; text-align: center; font-family: "Liberation Serif", serif; }
.panes { flex: 1; min-height: 0; display: flex; gap: 3px; margin: 2px 0; }
.vleft { width: 169px; display: flex; flex-direction: column; }
.lhead { display: flex; gap: 2px; height: 29px; padding-bottom: 1px; }
.lhead span { width: 50px; padding: 2px; font-weight: 400; font-style: italic; }
.lhead span:last-child { width: 39px; }
.lhead button { width: 100%; height: 100%; }
.lhead b { flex: 1; line-height: 29px; text-align: center; font-style: italic; }
.lbody { flex: 1; display: grid; grid-template: 1fr 14px / 149px 14px; gap: 4px; padding-left: 1px; }
.lfoot { height: 34px; border-top: 2px solid #000; padding: 2px 2px 2px 6px; box-shadow: inset 5px 0 var(--tl), inset 0 0 0 2px var(--tl); }
.opt { height: 100%; }
.vright { flex: 1; min-width: 0; display: flex; flex-direction: column; }
.rhead { height: 30px; display: flex; align-items: center; padding: 1px 2px 0 1px; }
.rhead .cat { width: 207px; height: 28px; font-style: italic; }
.rhead label { width: 52px; }
.rhead .opt { flex: 1; height: 28px; }
.rbody { flex: 1; min-height: 0; display: grid; grid-template: 1fr 14px / 303px 14px; gap: 4px; }
.rbody .list { padding-top: 5px; }
.nav { display: flex; height: 23px; margin-top: 2px; padding: 0 2px 0 1px; gap: 4px; align-items: stretch; }
.nav button { width: 44px; }
.nav .w { width: 53px; }
.nav label { width: 56px; padding-top: 3px; }
.field { flex: 1; min-width: 0; position: relative; }
.field input { display: block; width: 100%; height: 100%; padding: 0 0 3px 6px; }
.field svg { position: absolute; left: 3px; top: 2px; }
.optrow { display: flex; height: 33px; margin-top: 3px; }
.boxed { width: 221px; border: 1px solid #000; display: flex; }
.boxed .az { width: 122px; padding: 1px 1px 1px 6px; border-right: 1px solid #000; box-shadow: inset 5px 0 var(--tl); }
.boxed label { width: 28px; line-height: 32px; }
.boxed .sv { flex: 1; background: #18e818; padding: 1px 2px 1px 6px; }
.sv select { --l: #9cff9c; --d: #107a10; background: #18e818; }
.sv::after { border-color: #9cff9c #107a10 #107a10 #9cff9c; }
.show { display: flex; align-items: center; gap: 4px; padding-left: 3px; height: 27px; }
.show input { appearance: none; width: 13px; height: 13px; --l: #a9f0dd; --d: #2f7867; border-width: 1px; }
.dru { display: flex; justify-content: flex-end; gap: 4px; padding: 1px 2px 2px 0; height: 33px; }
.dru .u { width: 34px; }
.vinfo { height: 19px; line-height: 21px; text-align: center; }
.verf { height: 19px; margin: 2px 0 1px; padding-left: 2px; background: #ffffcc; line-height: 21px; }
.vfoot { height: 33px; display: flex; gap: 4px; padding: 2px 1px 1px; }
.vfoot .close { flex: 1; }
.hot { border-color: #e01818; background: #e01818; }
</style>
